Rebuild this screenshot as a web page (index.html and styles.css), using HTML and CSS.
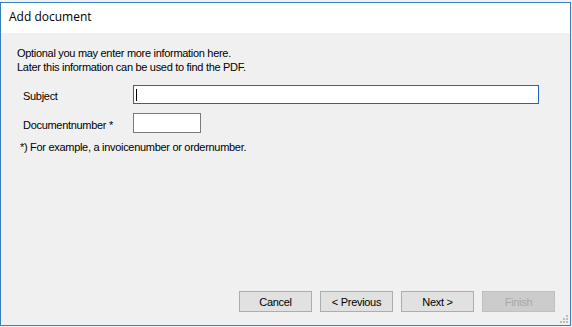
FILE: index.html
```html
<!DOCTYPE html>
<html lang="en">
<head>
  <meta charset="UTF-8">
  <title>Add document</title>
  <link rel="stylesheet" href="styles.css">
</head>
<body>
  <div class="window">
    <div class="titlebar">Add document</div>

    <div class="content">
      <p class="intro">Optional you may enter more information here.<br>Later this information can be used to find the PDF.</p>

      <div class="fields">
        <label for="subject">Subject</label>
        <div class="field-box"><input type="text" id="subject" class="input-wide focused"><span class="caret"></span></div>

        <label for="docnr">Documentnumber *</label>
        <div class="field-box"><input type="text" id="docnr" class="input-small"></div>
      </div>

      <p class="note">*) For example, a invoicenumber or ordernumber.</p>

      <div class="buttons">
        <button>Cancel</button>
        <button>&lt; Previous</button>
        <button>Next &gt;</button>
        <button disabled>Finish</button>
      </div>

      <svg class="grip" width="10" height="10" viewBox="0 0 10 10">
        <rect x="7" y="1" width="2" height="2" fill="#bcbcbc"/>
        <rect x="4" y="4" width="2" height="2" fill="#bcbcbc"/>
        <rect x="7" y="4" width="2" height="2" fill="#bcbcbc"/>
        <rect x="1" y="7" width="2" height="2" fill="#bcbcbc"/>
        <rect x="4" y="7" width="2" height="2" fill="#bcbcbc"/>
        <rect x="7" y="7" width="2" height="2" fill="#bcbcbc"/>
      </svg>
    </div>
  </div>
</body>
</html>
```

FILE: styles.css
```css
html, body {
  margin: 0;
  padding: 0;
  background-color: #eef3f9;
}

.window {
  margin-top: 2px;
  width: 571px;
  height: 324px;
  box-sizing: border-box;
  border: 1px solid #3c7fc0;
  display: flex;
  flex-direction: column;
  background-color: #f0f0f0;
}

.titlebar {
  height: 30px;
  background-color: #fff;
  padding-left: 8px;
  font-family: 'Open Sans', 'Noto Sans', sans-serif;
  font-size: 12px;
  line-height: 28px;
  color: #000;
}

.content {
  flex: 1;
  position: relative;
  display: flex;
  flex-direction: column;
  padding: 13px 15px 13px 16px;
  font-family: 'Liberation Sans', Arial, sans-serif;
  font-size: 11px;
  letter-spacing: -0.3px;
  color: #000;
}

.intro {
  margin: 0;
  line-height: 14px;
}

.fields {
  display: grid;
  grid-template-columns: 110px 406px;
  row-gap: 9px;
  margin: 11px 0 0 6px;
  align-items: center;
}

.fields label {
  line-height: 14px;
  padding-top: 3px;
}

.field-box {
  position: relative;
  display: flex;
}

input {
  box-sizing: border-box;
  margin: 0;
  padding: 0 3px;
  border: 1px solid #7a7a7a;
  background-color: #fff;
  font-family: 'Liberation Sans', Arial, sans-serif;
  font-size: 11px;
  outline: none;
}

.input-wide {
  width: 406px;
  height: 19px;
}

.input-wide.focused {
  border-color: #1c6ab5;
}

.input-small {
  width: 68px;
  height: 20px;
}

.caret {
  position: absolute;
  left: 3px;
  top: 4px;
  width: 1px;
  height: 12px;
  background-color: #000;
}

.note {
  margin: 7px 0 0 3px;
  line-height: 14px;
}

.buttons {
  margin-top: auto;
  display: flex;
  justify-content: flex-end;
  gap: 8px;
}

button {
  box-sizing: border-box;
  width: 73px;
  height: 21px;
  margin: 0;
  padding: 0;
  border: 1px solid #adadad;
  background-color: #e1e1e1;
  font-family: 'Liberation Sans', Arial, sans-serif;
  font-size: 11px;
  letter-spacing: -0.3px;
  color: #000;
}

button:disabled {
  border-color: #bfbfbf;
  background-color: #cccccc;
  color: #a8a8a8;
}

.grip {
  position: absolute;
  right: 1px;
  bottom: 1px;
}
```
